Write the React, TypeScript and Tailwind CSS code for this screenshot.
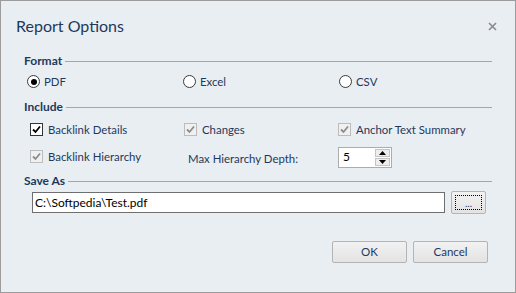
import React from "react";

const txt = "text-[11.4px] text-[#1e395b]";

function Check({ disabled }: { disabled?: boolean }) {
  return (
    <span
      className={
        "flex h-[13px] w-[13px] shrink-0 items-center justify-center border " +
        (disabled ? "border-[#bcbcbc] bg-[#f0f0f0]" : "border-[#333333] bg-white")
      }
    >
      <svg width="9" height="9" viewBox="0 0 9 9">
        <path
          d="M1 4.5 L3.5 7 L8 1.5"
          fill="none"
          stroke={disabled ? "#8c8c8c" : "#000"}
          strokeWidth="1.8"
        />
      </svg>
    </span>
  );
}

function Radio({ checked }: { checked?: boolean }) {
  return (
    <span className="flex h-[13px] w-[13px] shrink-0 items-center justify-center rounded-full border border-[#3a3a3a] bg-white">
      {checked && <span className="h-[6px] w-[6px] rounded-full bg-black" />}
    </span>
  );
}

function Header({ label }: { label: string }) {
  return (
    <div className="flex h-5 items-center gap-[3px]">
      <span className="text-[12px] font-bold text-[#1e395b]">{label}</span>
      <span className="h-px flex-1 bg-[#a6a6a6]" />
    </div>
  );
}

function Btn({ children }: { children: React.ReactNode }) {
  return (
    <button className="flex h-[22px] w-[75px] items-center justify-center rounded-[2px] border border-[#b4b4b4] bg-gradient-to-b from-[#f2f2f2] to-[#e3e3e3] text-[11.5px] text-[#1e395b]">
      {children}
    </button>
  );
}

export default function App() {
  return (
    <div
      className="flex h-[293px] w-[516px] flex-col border border-[#9c9c9c] bg-[#e9eef3]"
      style={{ fontFamily: "Lato, 'Open Sans', sans-serif" }}
    >
      <div className="flex h-[50px] shrink-0 items-center justify-between pl-[15px] pr-[18px]">
        <span className="text-[16px] text-[#1e395b]">Report Options</span>
        <svg width="9" height="9" viewBox="0 0 9 9">
          <path d="M1 1 L8 8 M8 1 L1 8" stroke="#8a8a8a" strokeWidth="1.6" />
        </svg>
      </div>
      <div className="flex flex-col pl-[23px] pr-[23px]">
        <Header label="Format" />
        <div className="grid h-[22px] grid-cols-[156px_156px_1fr] items-center pl-[3px]">
          <div className="flex items-center gap-[4px]">
            <Radio checked />
            <span className={txt}>PDF</span>
          </div>
          <div className="flex items-center gap-[4px]">
            <Radio />
            <span className={txt}>Excel</span>
          </div>
          <div className="flex items-center gap-[4px]">
            <Radio />
            <span className={txt}>CSV</span>
          </div>
        </div>
        <div className="mt-[4px]">
          <Header label="Include" />
        </div>
        <div className="mt-[3px] grid h-5 grid-cols-[154px_154px_1fr] items-center pl-[6px]">
          <div className="flex items-center gap-[5px]">
            <Check />
            <span className={txt}>Backlink Details</span>
          </div>
          <div className="flex items-center gap-[5px]">
            <Check disabled />
            <span className={txt}>Changes</span>
          </div>
          <div className="flex items-center gap-[5px]">
            <Check disabled />
            <span className={txt}>Anchor Text Summary</span>
          </div>
        </div>
        <div className="mt-[5px] grid h-[22px] grid-cols-[154px_154px_1fr] items-center pl-[6px]">
          <div className="flex items-center gap-[5px]">
            <Check disabled />
            <span className={txt}>Backlink Hierarchy</span>
          </div>
          <div className="pl-[4px]">
            <span className={txt}>Max Hierarchy Depth:</span>
          </div>
          <div className="flex h-[21px] w-[54px] items-center border border-[#acacac] bg-white">
            <span className="flex-1 pl-[4px] text-[12px] text-black">5</span>
            <div className="mr-[1px] flex h-[17px] w-[15px] flex-col gap-px">
              <span className="flex flex-1 items-center justify-center border border-[#c4c4c4] bg-[#eeeeee]">
                <svg width="7" height="4" viewBox="0 0 7 4">
                  <path d="M0 4 L3.5 0 L7 4 Z" fill="#000" />
                </svg>
              </span>
              <span className="flex flex-1 items-center justify-center border border-[#c4c4c4] bg-[#eeeeee]">
                <svg width="7" height="4" viewBox="0 0 7 4">
                  <path d="M0 0 L3.5 4 L7 0 Z" fill="#000" />
                </svg>
              </span>
            </div>
          </div>
        </div>
        <div className="mt-[4px]">
          <Header label="Save As" />
        </div>
        <div className="flex h-[23px] items-center gap-[6px] pl-[8px] pr-[6px]">
          <div className="flex h-[21px] flex-1 items-center border border-[#6f6f6f] bg-white pl-[2px]">
            <span className="text-[12px] text-black">C:\Softpedia\Test.pdf</span>
          </div>
          <button className="flex h-[23px] w-[35px] items-center justify-center rounded-[2px] border border-[#b4b4b4] bg-gradient-to-b from-[#f2f2f2] to-[#e3e3e3] p-[3px]">
            <span className="flex h-full w-full items-end justify-center border border-dotted border-black pb-[1px] text-[10px] leading-none text-[#1e395b]">
              ...
            </span>
          </button>
        </div>
        <div className="mt-[27px] flex justify-end gap-[6px] pr-[4px]">
          <Btn>OK</Btn>
          <Btn>Cancel</Btn>
        </div>
      </div>
    </div>
  );
}
